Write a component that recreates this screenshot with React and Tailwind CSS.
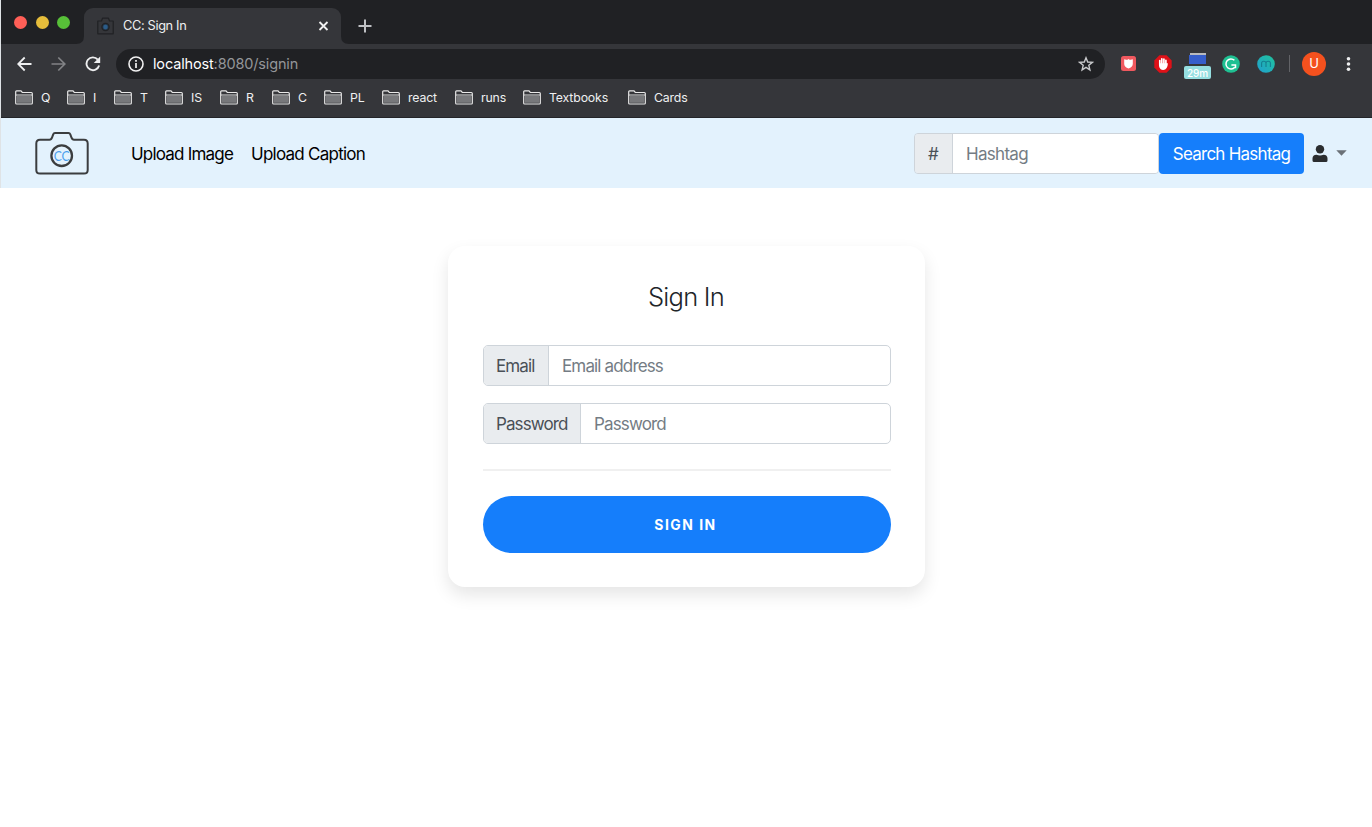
import React from "react";

const bookmarks = [
  { label: "Q", width: "w-[52px]" },
  { label: "I", width: "w-[47px]" },
  { label: "T", width: "w-[51px]" },
  { label: "IS", width: "w-[55px]" },
  { label: "R", width: "w-[52px]" },
  { label: "C", width: "w-[52px]" },
  { label: "PL", width: "w-[58px]" },
  { label: "react", width: "w-[73px]" },
  { label: "runs", width: "w-[68px]" },
  { label: "Textbooks", width: "w-[105px]" },
  { label: "Cards", width: "w-[70px]" },
];

function Camera({ className, stroke, accent }) {
  return (
    <svg className={className} viewBox="0 0 54 43" fill="none">
      <path
        d="M5 7.8H14.5C16 7.8 16.6 6.8 17.2 5.2L18.2 2.4C18.6 1.4 19 1.1 20 1.1H33.5C34.5 1.1 34.9 1.4 35.3 2.4L36.3 5.2C36.9 6.8 37.5 7.8 39 7.8H49C51.4 7.8 52.7 9.2 52.7 11.6V38C52.7 40.4 51.4 41.6 49 41.6H5C2.6 41.6 1.3 40.4 1.3 38V11.6C1.3 9.2 2.6 7.8 5 7.8Z"
        stroke={stroke}
        strokeWidth="2"
      />
      <circle cx="26.7" cy="23.7" r="10.3" stroke={stroke} strokeWidth="2.3" />
      <text
        x="26.7"
        y="28.6"
        textAnchor="middle"
        fontSize="13"
        fontFamily="Lato, sans-serif"
        textLength="16"
        lengthAdjust="spacingAndGlyphs"
        fill={accent}
      >
        CC
      </text>
    </svg>
  );
}

function Folder() {
  return (
    <svg className="h-[15px] w-[18px] shrink-0" viewBox="0 0 18 15" fill="none">
      <path d="M.7 13.2V1.8Q.7 .9 1.6 .9H6L7.3 2.5H16.4Q17.3 2.5 17.3 3.4V13.2Q17.3 14 16.4 14H1.6Q.7 14 .7 13.2Z" fill="#35363a" stroke="#e8e8e8" strokeWidth="1.2" />
      <path d="M2 6H16V12.8H2Z" fill="#77787b" />
      <path d="M1 5H17" stroke="#dedede" strokeWidth="1" />
    </svg>
  );
}

function TabStrip() {
  return (
    <div className="flex h-11 bg-[#202124]">
      <div className="flex w-[83px] items-start gap-[8.5px] pt-[15.5px] pl-[13px]">
        <span className="size-[13px] rounded-full bg-[#ff5f57]" />
        <span className="size-[13px] rounded-full bg-[#e6bd3b]" />
        <span className="size-[13px] rounded-full bg-[#57c038]" />
      </div>
      <div className="relative mt-2 flex h-9 w-[257px] items-center rounded-t-[9px] bg-[#35363a] pr-3 pl-[13px]">
        <svg className="absolute bottom-0 -left-2 size-2" viewBox="0 0 8 8">
          <path d="M8 0V8H0Q8 8 8 0Z" fill="#35363a" />
        </svg>
        <svg className="absolute -right-2 bottom-0 size-2" viewBox="0 0 8 8">
          <path d="M0 0V8H8Q0 8 0 0Z" fill="#35363a" />
        </svg>
        <svg className="h-[18px] w-[17px]" viewBox="0 0 17 18" fill="none">
          <path d="M.8 4H4.5L5.5 1.2H11.5L12.5 4H16.2V16.8H.8Z" stroke="#202124" strokeWidth="1.2" strokeLinejoin="round" />
          <circle cx="8.5" cy="10" r="3.6" stroke="#202124" strokeWidth="1.2" fill="#253b50" />
          <circle cx="8.5" cy="10" r="2.2" fill="#2b5c89" />
        </svg>
        <span className="ml-[9px] text-[12.8px] leading-none tracking-[-0.36px] text-[#eff0f1]">CC: Sign In</span>
        <svg className="ml-auto size-[11px]" viewBox="0 0 11 11">
          <path d="M1.5 1L9.5 9M9.5 1L1.5 9" stroke="#f1f1f1" strokeWidth="1.8" />
        </svg>
      </div>
      <svg className="mt-[19px] ml-[17px] size-[14px]" viewBox="0 0 14 14">
        <path d="M7 .5V13.5M.5 7H13.5" stroke="#bfc1c4" strokeWidth="2" />
      </svg>
    </div>
  );
}

function Toolbar() {
  return (
    <div className="flex h-[39px] items-center bg-[#35363a] pl-[16px]">
      <svg className="h-[16px] w-[15px]" viewBox="0 0 15 16" fill="none" stroke="#eeeff0" strokeWidth="1.8">
        <path d="M14.5 8H1.5M7.7 1.5L1.2 8L7.7 14.5" />
      </svg>
      <svg className="ml-[19px] h-[16px] w-[15px]" viewBox="0 0 15 16" fill="none" stroke="#828386" strokeWidth="1.7">
        <path d="M.5 8H13.5M7.3 1.5L13.8 8L7.3 14.5" />
      </svg>
      <svg className="ml-[19px] h-[16px] w-[16px]" viewBox="0 0 16 16" fill="none">
        <path d="M12.8 3.6A6.4 6.4 0 1 0 14.1 9.4" stroke="#eeeff0" strokeWidth="1.9" />
        <path d="M15.2 .6V7H8.8Z" fill="#eeeff0" />
      </svg>
      <div className="ml-[15px] flex h-[30px] w-[989px] items-center rounded-full bg-[#202124] pr-[11px] pl-3">
        <svg className="size-[16px]" viewBox="0 0 16 16" fill="none">
          <circle cx="8" cy="8" r="7" stroke="#f1f1f1" strokeWidth="1.6" />
          <path d="M8 7V12M8 4V5.7" stroke="#f1f1f1" strokeWidth="1.7" />
        </svg>
        <span className="ml-[9px] pt-px text-[14.5px] leading-none tracking-[-0.15px] text-[#949699]">
          <span className="text-white">localhost</span>:8080/signin
        </span>
        <svg className="ml-auto size-[16px]" viewBox="0 0 16 16" fill="none">
          <path d="M8 1.8L9.7 6L14.4 6.3L10.8 9.3L11.9 13.9L8 11.4L4.1 13.9L5.2 9.3L1.6 6.3L6.3 6Z" stroke="#c9cacc" strokeWidth="1.4" />
        </svg>
      </div>
      <svg className="ml-4 size-[15px]" viewBox="0 0 15 15">
        <rect width="15" height="15" rx="2.5" fill="#f0595f" />
        <path d="M3.2 3.3Q5.8 4.4 7.5 2.9Q9.2 4.4 11.8 3.3V8Q11.6 11 7.5 12.5Q3.4 11 3.2 8Z" fill="#fff" />
      </svg>
      <svg className="ml-[18px] size-[18px]" viewBox="0 0 18 18">
        <path d="M5.4 .3H12.6L17.7 5.4V12.6L12.6 17.7H5.4L.3 12.6V5.4Z" fill="#df1118" />
        <path d="M5.8 9.7V5.6M7.8 9V3.8M9.9 9V4M11.9 9.7V5.4" stroke="#fff" strokeWidth="1.7" strokeLinecap="round" />
        <path d="M5 8.2H12.4L13.9 8.3Q13.5 15 9.2 15Q5.8 15 5 11Z" fill="#fff" />
      </svg>
      <div className="mt-[5px] ml-3 flex h-[27px] w-[27px] flex-col items-center">
        <span className="h-[2px] w-[16px] bg-[#b9babd]" />
        <span className="h-[9px] w-[17px] bg-[#365ecb]" />
        <span className="mt-[2px] flex h-[13px] w-[27px] items-center justify-center rounded-[2px] bg-[#96dfe1] pt-px text-[10px] leading-none font-medium tracking-[-0.1px] text-white">
          29m
        </span>
      </div>
      <svg className="ml-[11px] size-[18px]" viewBox="0 0 18 18" fill="none">
        <circle cx="9" cy="9" r="8.8" fill="#1fc092" />
        <path d="M12.4 5.3A5 5 0 1 0 12.8 12.2M9.4 10H13.5V13.2" stroke="#fff" strokeWidth="1.5" />
      </svg>
      <svg className="ml-[17px] size-[18px]" viewBox="0 0 18 18" fill="none">
        <defs>
          <linearGradient id="mint" x1="0" y1="1" x2="1" y2="0">
            <stop stopColor="#209fcf" />
            <stop offset="1" stopColor="#20c39b" />
          </linearGradient>
        </defs>
        <circle cx="9" cy="9" r="8.8" fill="url(#mint)" />
        <path d="M4.6 12V8.2Q4.6 6.2 6.8 6.2Q9 6.2 9 8.2V12M9 8.2Q9 6.2 11.2 6.2Q13.4 6.2 13.4 8.2V12" stroke="#147f91" strokeWidth="1.1" />
      </svg>
      <span className="ml-[14px] h-[17px] w-px bg-[#626367]" />
      <span className="ml-3 flex size-[24px] items-center justify-center rounded-full bg-[#f4511e] text-[13px] leading-none text-white">U</span>
      <svg className="ml-5 h-[16px] w-[5px]" viewBox="0 0 5 16" fill="#eeeff0">
        <circle cx="2.5" cy="2.8" r="1.8" />
        <circle cx="2.5" cy="8" r="1.8" />
        <circle cx="2.5" cy="13.2" r="1.8" />
      </svg>
    </div>
  );
}

function BookmarksBar() {
  return (
    <div className="flex h-[35px] items-start border-b border-[#242529] bg-[#35363a] pt-[7px] pl-[14px]">
      {bookmarks.map(({ label, width }) => (
        <div key={label} className={`flex h-[15px] shrink-0 items-center gap-2 ${width}`}>
          <Folder />
          <span className="pt-[2px] text-[12.3px] leading-none tracking-[-0.15px] whitespace-nowrap text-[#eff0f1]">{label}</span>
        </div>
      ))}
    </div>
  );
}

function Navbar() {
  return (
    <nav className="flex h-[70px] items-center bg-[#e3f2fd] pl-[34px] text-[17px] text-black">
      <Camera className="h-[43px] w-[54px]" stroke="#3b3d3f" accent="#4b9fed" />
      <span className="ml-[42px] w-[103px] pt-[3px] tracking-[-0.8px] whitespace-nowrap">Upload Image</span>
      <span className="ml-[17px] pt-[3px] tracking-[-0.75px] whitespace-nowrap">Upload Caption</span>
      <div className="ml-auto flex h-[41px] w-[245px] overflow-hidden rounded-[4px] border border-[#ced4da]">
        <span className="flex w-[38px] items-center justify-center border-r border-[#ced4da] bg-[#e9ecef] pt-[3px] text-[#495057]">#</span>
        <input className="min-w-0 flex-1 bg-white px-[13px] pt-[3px] tracking-[-0.7px] outline-none placeholder:text-[#747c84]" placeholder="Hashtag" />
      </div>
      <button className="h-[41px] w-[145px] rounded-[4px] bg-[#157efb] pt-[3px] tracking-[-0.75px] whitespace-nowrap text-white">Search Hashtag</button>
      <svg className="ml-2 h-[17px] w-[16px]" viewBox="0 0 16 17" fill="#2b2d2f">
        <circle cx="8" cy="4.3" r="4.2" />
        <path d="M.5 15.5V13.6Q.5 9.7 4.5 9.7Q8 11.2 11.5 9.7Q15.5 9.7 15.5 13.6V15.5Q15.5 17 14 17H2Q.5 17 .5 15.5Z" />
      </svg>
      <svg className="mr-[25px] ml-2 h-[6px] w-[11px]" viewBox="0 0 11 6" fill="#6b7177">
        <path d="M.3 .3H10.7L5.5 5.7Z" />
      </svg>
    </nav>
  );
}

function Field({ label, placeholder, type, labelWidth }) {
  return (
    <label className="flex h-[41px] overflow-hidden rounded-[5px] border border-[#ced4da] text-[17px]">
      <span className={`flex shrink-0 items-center border-r border-[#ced4da] bg-[#e9ecef] pt-[3px] pl-[12px] tracking-[-0.9px] text-[#495057] ${labelWidth}`}>{label}</span>
      <input type={type} placeholder={placeholder} className="min-w-0 flex-1 bg-transparent px-[13px] pt-[3px] tracking-[-0.85px] outline-none placeholder:text-[#747c84]" />
    </label>
  );
}

function SignInCard() {
  return (
    <form className="flex w-[477px] flex-col rounded-[17px] bg-white pt-[34px] pr-[34px] pb-[34px] pl-[35px] shadow-[0_8px_17px_0_rgba(0,0,0,0.1)]">
      <h1 className="pt-px pr-[2px] text-center text-[25.5px] leading-[31px] font-light tracking-[-0.75px] text-[#212529]">Sign In</h1>
      <div className="mt-[33px] flex flex-col gap-[17px]">
        <Field label="Email" placeholder="Email address" type="email" labelWidth="w-[65px]" />
        <Field label="Password" placeholder="Password" type="password" labelWidth="w-[97px]" />
      </div>
      <hr className="mt-[25px] border-t-2 border-[#f0f0f0]" />
      <button type="button" className="mt-[25px] h-[57px] rounded-full bg-[#157efb] pt-px pr-[3px] text-[13.9px] font-bold tracking-[1.5px] text-white">
        SIGN IN
      </button>
    </form>
  );
}

export default function App() {
  return (
    <div className="h-[827px] w-[1372px] overflow-hidden bg-white font-['Inter',sans-serif]">
      <header className="border-l border-[#dfe3e6]">
        <TabStrip />
        <Toolbar />
        <BookmarksBar />
        <Navbar />
      </header>
      <main className="flex justify-center pt-[58px] pl-px">
        <SignInCard />
      </main>
    </div>
  );
}
